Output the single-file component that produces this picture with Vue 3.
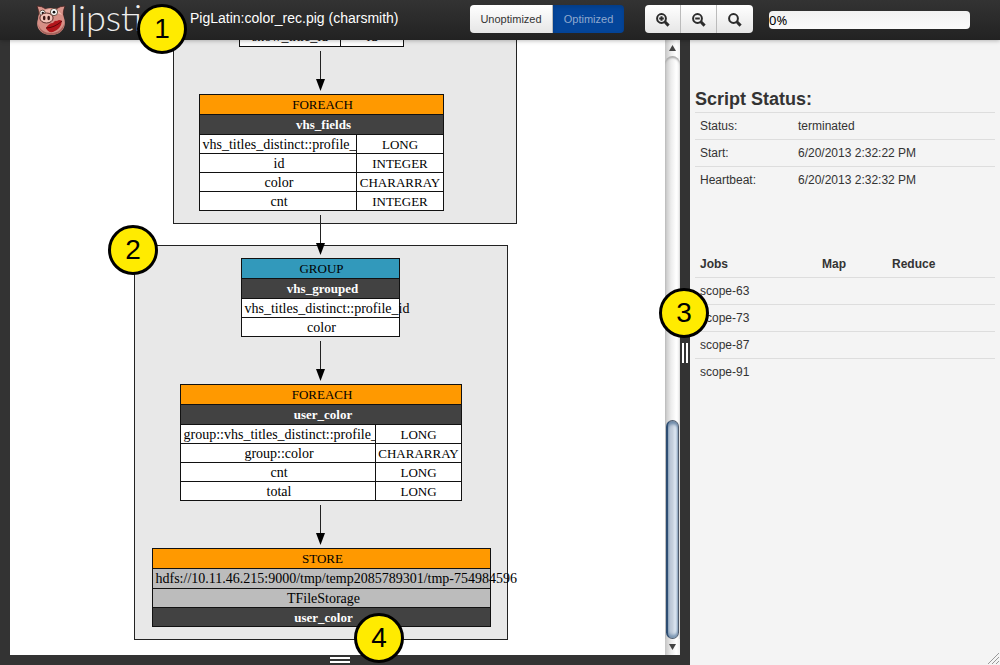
<script setup>
const clusters = [
  { x: 173.5, y: 20.5, w: 343, h: 203 },
  { x: 134.5, y: 245.5, w: 373, h: 394 },
]

const arrows = [
  { x: 320.5, from: 51, to: 91 },
  { x: 320.5, from: 215, to: 255 },
  { x: 320.5, from: 341, to: 381 },
  { x: 320.5, from: 505, to: 545 },
]

const nodes = [
  {
    id: 'fields', x: 199.5, y: 94.5, w: 244, split: 157, kind: 'map', title: 'FOREACH',
    rows: [
      { style: 'alias', text: 'vhs_fields' },
      { text: 'vhs_titles_distinct::profile_id', type: 'LONG', start: true },
      { text: 'id', type: 'INTEGER' },
      { text: 'color', type: 'CHARARRAY' },
      { text: 'cnt', type: 'INTEGER' },
    ],
  },
  {
    id: 'grouped', x: 241.5, y: 258.5, w: 158, kind: 'group', title: 'GROUP',
    rows: [
      { style: 'alias', text: 'vhs_grouped' },
      { text: 'vhs_titles_distinct::profile_id', start: true },
      { text: 'color' },
    ],
  },
  {
    id: 'user', x: 180.5, y: 384.5, w: 281, split: 195, kind: 'map', title: 'FOREACH',
    rows: [
      { style: 'alias', text: 'user_color' },
      { text: 'group::vhs_titles_distinct::profile_id', type: 'LONG', start: true },
      { text: 'group::color', type: 'CHARARRAY' },
      { text: 'cnt', type: 'LONG' },
      { text: 'total', type: 'LONG' },
    ],
  },
  {
    id: 'store', x: 152.5, y: 548.5, w: 338, kind: 'map', title: 'STORE',
    rows: [
      { style: 'storage', text: 'hdfs://10.11.46.215:9000/tmp/temp2085789301/tmp-754984596', start: true },
      { style: 'storage', text: 'TFileStorage' },
      { style: 'alias', text: 'user_color' },
    ],
  },
]

const rowTop = (node, i) => node.y + (i === 0 ? 20 : 21 + i * 19)
const rowHeight = (i) => (i === 0 ? 20 : 19)
const nameWidth = (node, row) => (row.type ? node.split : node.w)

const status = [
  ['Status:', 'terminated'],
  ['Start:', '6/20/2013 2:32:22 PM'],
  ['Heartbeat:', '6/20/2013 2:32:32 PM'],
]
const jobs = ['scope-63', 'scope-73', 'scope-87', 'scope-91']
</script>

<template>
  <div class="app">
    <header class="topbar">
      <a class="brand" href="#">
        <svg class="pig" viewBox="0 0 30 30" aria-hidden="true">
          <path d="M1 1 Q6 1 10 4 L7 11 L3 12 Q3 5 1 1Z" fill="#d9958c" stroke="#4a2522" stroke-width=".8" />
          <path d="M29 1 Q24 1 20 4 L23 11 L27 12 Q27 5 29 1Z" fill="#d9958c" stroke="#4a2522" stroke-width=".8" />
          <path d="M15 3 C23 3 27 7 28 13 C31 21 26 30 15 30 C4 30 -1 22 2 14 C2 8 7 3 15 3Z" fill="#d68f86" />
          <path d="M15 4 C20 4 24 6 26 10 C20 7 10 7 4 10 C6 6 10 4 15 4Z" fill="#efb9ae" />
          <path d="M2 19 C3 27 9 30 15 30 C22 30 28 26 28 19 C25 26 20 28 15 28 C9 28 4 25 2 19Z" fill="#a8645d" />
          <circle cx="6.5" cy="8" r="2.8" fill="#fff" stroke="#432" stroke-width=".8" />
          <circle cx="18" cy="7" r="3.6" fill="#fff" stroke="#432" stroke-width=".8" />
          <circle cx="6.8" cy="8" r="1.2" fill="#111" />
          <circle cx="18" cy="7.2" r="1.4" fill="#111" />
          <ellipse cx="10.5" cy="13" rx="6.6" ry="5" fill="#f3c4b9" stroke="#5c302c" stroke-width="1" />
          <ellipse cx="8.2" cy="13" rx="1.3" ry="2.2" fill="#3d1a18" />
          <ellipse cx="12.7" cy="13" rx="1.3" ry="2.2" fill="#3d1a18" />
          <path d="M10 23 Q13 18 17 18 Q19 15 21 16 Q23 14 26 16 Q25 24 17 27 Q12 28 10 23Z" fill="#b3161b" />
          <path d="M10 23 Q18 23 26 16" fill="none" stroke="#5c0709" stroke-width="1" />
        </svg>
        <span class="word">lipstick</span>
        <span class="badge badge-brand">1</span>
      </a>
      <h1 class="title">PigLatin:color_rec.pig (charsmith)</h1>
      <div class="group modes">
        <button type="button">Unoptimized</button>
        <button type="button" class="active">Optimized</button>
      </div>
      <div class="group zooms">
        <button type="button" aria-label="Zoom in">
          <svg viewBox="0 0 14 14"><circle cx="5.5" cy="5.5" r="4.4" /><path d="M8.8 8.8 L12.6 12.6" class="handle" /><path d="M5.5 3.2 V7.8 M3.2 5.5 H7.8" /></svg>
        </button>
        <button type="button" aria-label="Zoom out">
          <svg viewBox="0 0 14 14"><circle cx="5.5" cy="5.5" r="4.4" /><path d="M8.8 8.8 L12.6 12.6" class="handle" /><path d="M3.2 5.5 H7.8" /></svg>
        </button>
        <button type="button" aria-label="Reset zoom">
          <svg viewBox="0 0 14 14"><circle cx="5.5" cy="5.5" r="4.4" /><path d="M8.8 8.8 L12.6 12.6" class="handle" /></svg>
        </button>
      </div>
      <div class="progress" role="progressbar" aria-valuenow="0" aria-valuemin="0" aria-valuemax="100">0%</div>
    </header>

    <div class="body">
      <main class="left">
        <div class="workspace">
          <section class="canvas">
            <svg class="graph" width="655" height="615" viewBox="10 40 655 615">
              <rect v-for="c in clusters" :key="c.y" class="cluster" :x="c.x" :y="c.y" :width="c.w" :height="c.h" />

              <g>
                <rect class="cell" x="239.5" y="27.5" width="101" height="19" />
                <rect class="cell" x="340.5" y="27.5" width="63" height="19" />
                <text class="name" x="290" y="41">show_title_id</text>
                <text class="name" x="372" y="41">id</text>
              </g>

              <g v-for="a in arrows" :key="a.from">
                <line class="edge" :x1="a.x" :x2="a.x" :y1="a.from" :y2="a.to - 12" />
                <polygon :points="`${a.x - 4.5},${a.to - 12} ${a.x + 4.5},${a.to - 12} ${a.x},${a.to}`" />
              </g>

              <g v-for="n in nodes" :key="n.id">
                <rect class="cell" :class="n.kind" :x="n.x" :y="n.y" :width="n.w" height="20" />
                <text class="type" :x="n.x + n.w / 2 + 1" :y="n.y + 14">{{ n.title }}</text>
                <g v-for="(r, i) in n.rows" :key="i">
                  <rect class="cell" :class="r.style" :x="n.x" :y="rowTop(n, i)" :width="nameWidth(n, r)" :height="rowHeight(i)" />
                </g>
                <g v-for="(r, i) in n.rows" :key="'t' + i">
                  <text
                    :class="['name', r.style === 'alias' ? 'alias-text' : '', r.start ? 'start' : '']"
                    :x="r.start ? n.x + 3 : n.x + nameWidth(n, r) / 2 + (r.style ? 2 : 1)"
                    :y="rowTop(n, i) + 14"
                  >{{ r.text }}</text>
                  <template v-if="r.type">
                    <rect class="cell" :x="n.x + n.split" :y="rowTop(n, i)" :width="n.w - n.split" :height="rowHeight(i)" />
                    <text class="type" :x="n.x + (n.split + n.w) / 2" :y="rowTop(n, i) + 14">{{ r.type }}</text>
                  </template>
                </g>
              </g>
            </svg>
            <span class="badge badge-cluster">2</span>
          </section>
          <div class="scroll">
            <svg class="arrow" viewBox="0 0 14 16"><path d="M7 5 L10.5 11 H3.5Z" /></svg>
            <div class="track"><div class="thumb"></div></div>
            <svg class="arrow" viewBox="0 0 14 16"><path d="M7 11 L10.5 5 H3.5Z" /></svg>
          </div>
          <div class="divider">
            <span class="grip"></span>
            <span class="badge badge-divider">3</span>
          </div>
        </div>
        <div class="footer">
          <span class="grip-flat"></span>
          <span class="badge badge-footer">4</span>
        </div>
      </main>

      <aside class="side">
        <h2>Script Status:</h2>
        <table class="status">
          <tbody>
            <tr v-for="s in status" :key="s[0]"><th scope="row">{{ s[0] }}</th><td>{{ s[1] }}</td></tr>
          </tbody>
        </table>
        <table class="jobs">
          <thead>
            <tr><th scope="col">Jobs</th><th scope="col">Map</th><th scope="col">Reduce</th></tr>
          </thead>
          <tbody>
            <tr v-for="j in jobs" :key="j"><td>{{ j }}</td><td></td><td></td></tr>
          </tbody>
        </table>
        <svg class="corner" viewBox="0 0 14 14" aria-hidden="true"><path d="M2 13 L13 2 M6 13 L13 6 M10 13 L13 10" /></svg>
      </aside>
    </div>
  </div>
</template>

<style>
body { margin: 0; background: #f4f4f4; }
</style>

<style scoped>
* { box-sizing: border-box; }
.app {
  min-height: 100vh;
  display: flex;
  flex-direction: column;
  font: 12px/18px "Liberation Sans", Arial, sans-serif;
  color: #333;
}
.topbar {
  position: relative;
  z-index: 2;
  height: 40px;
  display: flex;
  align-items: center;
  padding: 0 30px 0 36px;
  background: linear-gradient(#333, #222);
  box-shadow: 0 1px 4px rgba(0, 0, 0, .25);
}
.brand {
  position: relative;
  flex: none;
  width: 154px;
  height: 40px;
  display: flex;
  align-items: center;
  gap: 4px;
  text-decoration: none;
  color: #eee;
}
.pig { width: 30px; height: 30px; flex: none; }
.word {
  padding-bottom: 6px;
  font-family: Lato, "Open Sans", sans-serif;
  font-size: 36px;
  line-height: 36px;
  font-weight: 300;
}
.title {
  flex: none;
  width: 280px;
  margin: 0;
  padding-bottom: 4px;
  font-size: 14px;
  line-height: 20px;
  font-weight: 400;
  color: #fff;
  white-space: nowrap;
}
.group { flex: none; display: flex; height: 28px; margin-bottom: 2px; }
.group button {
  margin: 0;
  padding: 0;
  border: 0;
  border-right: 1px solid #bbb;
  background: linear-gradient(#fff, #e6e6e6);
  color: #333;
  font: 11px/18px "Liberation Sans", Arial, sans-serif;
  display: flex;
  align-items: center;
  justify-content: center;
}
.group button:first-child { border-radius: 4px 0 0 4px; }
.group button:last-child { border-radius: 0 4px 4px 0; border-right: 0; }
.modes { margin-right: 21px; }
.modes button { width: 83px; }
.modes button.active { width: 71px; background: #04459a; color: #8fa9cf; box-shadow: inset 0 2px 4px rgba(0, 0, 0, .15); }
.zooms { margin-right: 16px; }
.zooms button { width: 36px; padding-top: 1px; }
.zooms svg { width: 14px; height: 14px; fill: none; stroke: #2b2b2b; stroke-width: 2; }
.zooms .handle { stroke-width: 3; }
.progress {
  flex: 1;
  height: 18px;
  border-radius: 4px;
  background: linear-gradient(#f1f1f1, #fafafa);
  color: #000;
  font: 13px/18px "Noto Sans", sans-serif;
}

.body { flex: 1; display: grid; grid-template-columns: minmax(0, 69fr) minmax(0, 31fr); }
.left { display: flex; flex-direction: column; background: #333; }
.workspace { flex: 1; display: flex; padding-left: 10px; }
.canvas { position: relative; flex: 1; min-width: 0; background: #fff; overflow: hidden; }
.graph { display: block; font-family: "Liberation Serif", "Times New Roman", serif; }
.cluster { fill: #e8e8e8; stroke: #222; }
.edge { stroke: #222; }
.cell { fill: #fff; stroke: #111; }
.cell.map { fill: #ff9900; }
.cell.group { fill: #3299bb; }
.cell.alias { fill: #424242; }
.cell.storage { fill: #bcbcbc; }
.graph text { fill: #000; text-anchor: middle; }
.type { font-size: 13px; }
.name { font-size: 14px; }
.graph .alias-text { font-size: 13px; font-weight: 700; fill: #fff; }
.graph .start { text-anchor: start; }

.scroll {
  flex: none;
  width: 15px;
  display: flex;
  flex-direction: column;
  background: linear-gradient(90deg, #c4c4c4, #ececec 40%, #fff 75%, #f0f0f0);
}
.arrow { display: block; height: 16px; fill: #444; }
.track {
  flex: 1;
  display: flex;
  flex-direction: column;
  justify-content: flex-end;
  border-radius: 8px 8px 0 0;
  box-shadow: inset 0 2px 2px #aaa;
}
.thumb {
  height: 37.5%;
  margin: 0 1px;
  border: 1px solid #4d5a6c;
  border-left: 2px solid #2d4d72;
  border-radius: 7px;
  background: linear-gradient(90deg, #c3d0df, #c0cbd9 40%, #e3edf8 80%, #c4d2e2);
  box-shadow: inset 0 3px 3px #6d89a8, inset 0 -3px 3px #7c97b3;
}
.divider { position: relative; flex: none; width: 10px; background: #333; display: flex; justify-content: center; align-items: center; }
.grip { width: 6px; height: 20px; margin-top: 10px; border: solid #fff; border-width: 0 2px; }
.footer { position: relative; height: 10px; display: flex; justify-content: center; align-items: center; padding-right: 10px; }
.grip-flat { width: 20px; height: 6px; border: solid #fff; border-width: 2px 0; }

.badge {
  position: absolute;
  z-index: 3;
  width: 50px;
  height: 50px;
  border: 3px solid #000;
  border-radius: 50%;
  background: #ffeb00;
  color: #000;
  font: 28px/44px "Liberation Sans", Arial, sans-serif;
  text-align: center;
}
.badge-brand { left: 101px; top: 4px; }
.badge-cluster { left: 98px; top: 185px; }
.badge-divider { left: -21px; top: 248px; }
.badge-footer { left: 354px; bottom: 2px; }

.side { position: relative; background: #f4f4f4; padding: 49px 5px 0; }
h2 { margin: 0 0 3px; font-size: 18px; line-height: 20px; font-weight: 700; }
table { width: 100%; border-collapse: separate; border-spacing: 0; table-layout: fixed; }
th, td { height: 27px; padding: 4px 5px; text-align: left; font-weight: 400; border-top: 1px solid #ddd; }
.status th { width: 98px; }
.jobs { margin-top: 58px; }
.jobs th { height: 26px; border-top: 0; font-weight: 700; }
.jobs th:nth-child(1) { width: 122px; }
.jobs th:nth-child(2) { width: 70px; }
.corner { position: absolute; right: 0; bottom: 0; width: 14px; height: 14px; fill: none; stroke: #999; }
</style>
